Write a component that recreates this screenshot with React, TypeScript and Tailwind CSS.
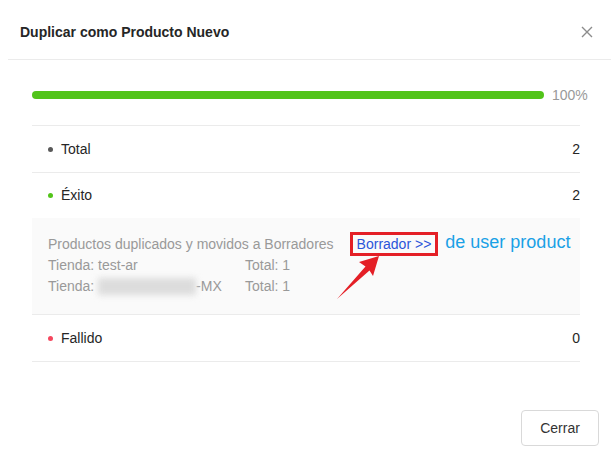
import React from 'react';

interface Row {
  label: string;
  value: number;
  dot: string;
}

const rows: Row[] = [
  { label: 'Total', value: 2, dot: 'bg-[#595959]' },
  { label: 'Éxito', value: 2, dot: 'bg-[#52c41a]' },
  { label: 'Fallido', value: 0, dot: 'bg-[#f5475e]' },
];

const StatRow: React.FC<{ row: Row; className?: string }> = ({ row, className }) => (
  <div className={`flex items-center justify-between pl-4 ${className ?? ''}`}>
    <div className="flex items-center gap-2">
      <span className={`w-[5px] h-[5px] rounded-full ${row.dot}`} />
      <span className="text-[14px] text-[#262626]">{row.label}</span>
    </div>
    <span className="text-[14px] text-[#262626]">{row.value}</span>
  </div>
);

const App: React.FC = () => {
  return (
    <div className="w-[611px] h-[460px] bg-white flex flex-col font-['Liberation_Sans',Arial,sans-serif]">
      {/* Header */}
      <div className="h-[59px] pt-[5px] pl-5 pr-[18px] flex items-center justify-between">
        <h1 className="text-[14px] font-bold text-[#262626]">Duplicar como Producto Nuevo</h1>
        <svg width="12" height="12" viewBox="0 0 12 12" className="text-[#8c8c8c]">
          <path d="M1 1 L11 11 M11 1 L1 11" stroke="currentColor" strokeWidth="1.4" />
        </svg>
      </div>
      <div className="ml-2 h-px bg-[#ebebeb]" />

      {/* Body */}
      <div className="pl-8 pr-[31px]">
        <div className="h-[65px] pt-[5px] flex items-center">
          <div className="w-[512px] shrink-0 h-[8px] rounded-full bg-[#52c41a]" />
          <span className="ml-2 text-[14px] text-[#999999] whitespace-nowrap">100%</span>
        </div>

        <div className="border-t border-[#ebebeb]">
          <StatRow row={rows[0]} className="h-[47px] border-b border-[#ebebeb]" />
          <StatRow row={rows[1]} className="h-[45px]" />

          {/* Detail */}
          <div className="relative bg-[#fafafa] border-b border-[#ebebeb] pl-4 pt-4 pb-[17px] text-[14px] leading-[21px] text-[#999999]">
            <div className="flex">
              <span>Productos duplicados y movidos a Borradores</span>
              <span className="relative ml-[23px] text-[#2b55d9] whitespace-nowrap">
                Borrador &gt;&gt;
                <span className="absolute -left-[7px] -right-[7px] -top-[2px] -bottom-[1px] border-[3px] border-[#e41f26]" />
                <span className="absolute left-[calc(100%+14px)] -top-[2px] text-[18px] text-[#1aa1e6] whitespace-nowrap">
                  de user product
                </span>
              </span>
            </div>
            <div className="grid grid-cols-[197px_1fr]">
              <span>Tienda: test-ar</span>
              <span>Total: 1</span>
              <span className="flex items-center">
                Tienda:&nbsp;
                <span className="inline-block w-[98px] h-[17px] bg-[#dcdcdc] blur-[3px]" />
                -MX
              </span>
              <span>Total: 1</span>
            </div>

            <svg width="56" height="56" viewBox="0 0 56 56" className="absolute left-[298px] top-[32px]">
              <polygon points="49,6 43,26 39.5,20.5 7,49 35.5,16.5 29,12" fill="#e41f26" />
            </svg>
          </div>

          <StatRow row={rows[2]} className="h-[47px] border-b border-[#ebebeb]" />
        </div>
      </div>

      {/* Footer */}
      <div className="flex-1 flex items-end justify-end pr-3 pb-[14px]">
        <button className="w-[78px] h-[36px] rounded-[4px] border border-[#d9d9d9] bg-white text-[14px] text-[#333333]">
          Cerrar
        </button>
      </div>
    </div>
  );
};

export default App;
